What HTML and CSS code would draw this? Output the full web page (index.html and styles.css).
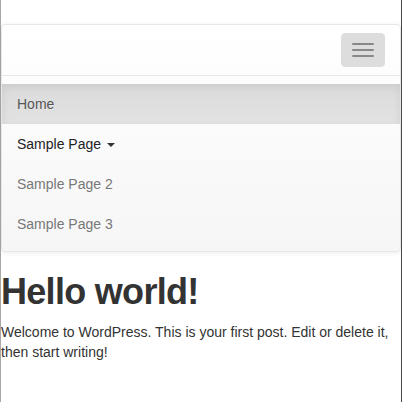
FILE: index.html
```html
<!DOCTYPE html>
<html>
<head>
<meta charset="utf-8">
<link rel="stylesheet" href="styles.css">
</head>
<body>
<div class="frame">
  <nav class="navbar">
    <div class="navbar-header">
      <button class="toggle" type="button" aria-label="Toggle navigation">
        <span class="bar"></span>
        <span class="bar"></span>
        <span class="bar"></span>
      </button>
    </div>
    <div class="collapse">
      <ul class="nav">
        <li class="active"><a href="#">Home</a></li>
        <li class="open"><a href="#">Sample Page <span class="caret"></span></a></li>
        <li><a href="#">Sample Page 2</a></li>
        <li><a href="#">Sample Page 3</a></li>
      </ul>
    </div>
  </nav>
  <article class="post">
    <h1 class="title">Hello world!</h1>
    <p class="body">Welcome to WordPress. This is your first post. Edit or delete it, then start writing!</p>
  </article>
</div>
</body>
</html>
```
FILE: styles.css
```css
html, body {
  margin: 0;
  padding: 0;
  background: #fff;
}
body {
  font-family: "Liberation Sans", Arial, sans-serif;
  font-size: 14px;
  line-height: 20px;
  color: #333;
}
.frame {
  min-height: 402px;
  box-sizing: border-box;
  border-left: 1px solid #a8a8a8;
  border-right: 1px solid #4a4a4a;
  padding-top: 24px;
}
.navbar {
  border: 1px solid #e7e7e7;
  border-radius: 4px;
  background-image: linear-gradient(to bottom, #fff 0, #f6f6f6 100%);
  box-shadow: inset 0 1px 0 rgba(255,255,255,.15), 0 1px 5px rgba(0,0,0,.075);
  margin-bottom: 20px;
}
.navbar-header {
  height: 50px;
  display: flex;
  justify-content: flex-end;
  align-items: flex-start;
}
.toggle {
  margin: 8px 15px 8px 0;
  padding: 9px 10px;
  width: 44px;
  height: 34px;
  box-sizing: border-box;
  border: 1px solid #ddd;
  border-radius: 4px;
  background: #ddd;
  display: flex;
  flex-direction: column;
  gap: 4px;
  align-items: center;
  justify-content: center;
}
.bar {
  display: block;
  width: 22px;
  height: 2px;
  border-radius: 1px;
  background: #888;
}
.collapse {
  border-top: 1px solid #e7e7e7;
  box-shadow: inset 0 1px 0 rgba(255,255,255,.1);
}
.nav {
  list-style: none;
  margin: 7.5px 0;
  padding: 0;
}
.nav a {
  display: block;
  padding: 10px 15px;
  line-height: 20px;
  color: #777;
  text-decoration: none;
  text-shadow: 0 1px 0 rgba(255,255,255,.25);
}
.nav .active a {
  color: #555;
  background-image: linear-gradient(to bottom, #dbdbdb 0, #e2e2e2 100%);
  box-shadow: inset 0 3px 9px rgba(0,0,0,.075);
}
.nav .open a {
  color: #222;
}
.caret {
  display: inline-block;
  width: 0;
  height: 0;
  margin-left: 2px;
  vertical-align: middle;
  border-top: 4px solid #333;
  border-left: 4px solid transparent;
  border-right: 4px solid transparent;
}
.title {
  font-size: 36px;
  line-height: 1.1;
  font-weight: 700;
  letter-spacing: -0.7px;
  margin: 20px 0 10px;
  color: #333;
}
.body {
  margin: 0 0 10px;
}
```
